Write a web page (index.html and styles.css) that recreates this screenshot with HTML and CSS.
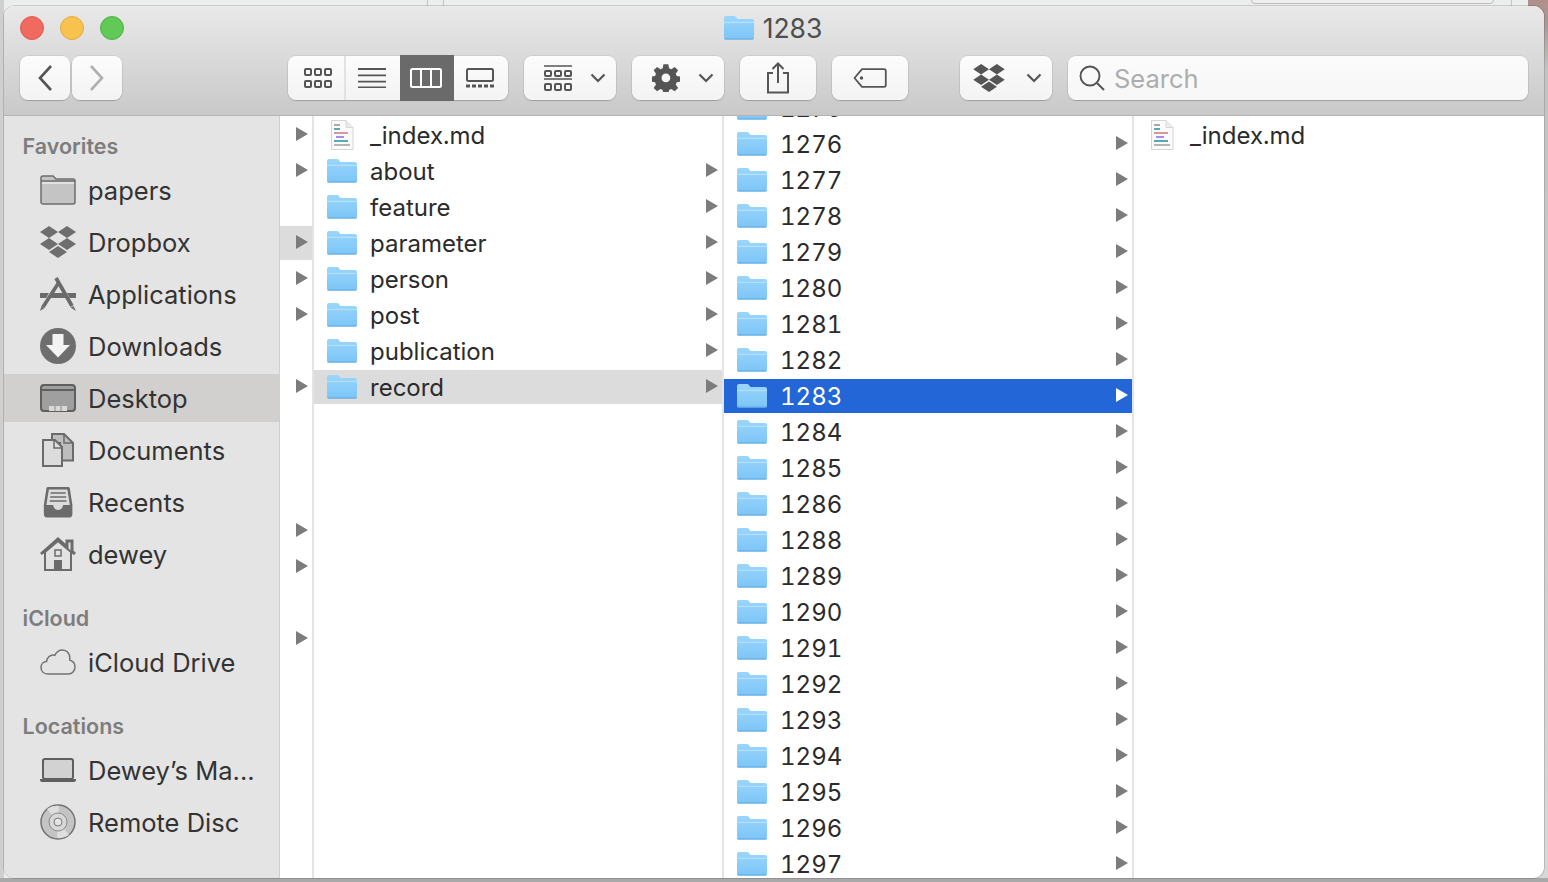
FILE: index.html
```html
<!DOCTYPE html>
<html lang="en">
<head>
<meta charset="utf-8">
<title>1283</title>
<link rel="stylesheet" href="styles.css">
</head>
<body>
<svg class="defs" width="0" height="0" aria-hidden="true">
  <defs>
    <linearGradient id="fg" x1="0" y1="0" x2="0" y2="1"><stop offset="0" stop-color="#9ad6fc"/><stop offset="1" stop-color="#7cc5f7"/></linearGradient>
    <symbol id="folder" viewBox="1 1 29 22.500" preserveAspectRatio="none">
      <path d="M1 3.200C1 1.800 1.800 1 3 1h7.500c1 0 1.500.4 2.200 1.200l1.300 1.600h14c1.300 0 2 .8 2 2V21.500c0 1-.7 1.500-1.700 1.500H2.700C1.700 23 1 22.500 1 21.500z" fill="url(#fg)"/>
      <path d="M1 7h29" stroke="#b4e1fd" stroke-width="1" fill="none"/>
      <path d="M1.500 22.600h28" stroke="#62a9de" stroke-width="1" fill="none"/>
    </symbol>
    <symbol id="file" viewBox="0 0 24 32">
      <path d="M1.500 1.500H16L23 8.500V30.500H1.500z" fill="#fbfbfb" stroke="#d4d4d4"/>
      <path d="M16 1.500V8.500H23" fill="#ececec" stroke="#d8d8d8"/>
      <rect x="4" y="5" width="6" height="2" fill="#a9a9a9"/>
      <rect x="4" y="9" width="6" height="2" fill="#58a9b5"/>
      <rect x="4" y="13" width="14" height="2" fill="#d59a9a"/>
      <rect x="6" y="17" width="8" height="2" fill="#a88bef"/>
      <rect x="4" y="21" width="14" height="2" fill="#58a9b5"/>
      <rect x="4" y="25" width="16" height="2" fill="#b5b5b5"/>
    </symbol>
    <symbol id="dbx" viewBox="0 0 36 32">
      <path d="M9 0 18 6 9 12 0 6zM27 0 36 6 27 12 18 6zM9 12 18 18 9 24 0 18zM27 12 36 18 27 24 18 18zM18 20 27 26 18 32 9 26z"/>
    </symbol>
    <symbol id="tri" viewBox="0 0 12 14"><path d="M0 0 12 7 0 14z"/></symbol>
    <symbol id="chev" viewBox="0 0 16 10"><path d="M1.500 1.500 8 8l6.500-6.500" fill="none" stroke="currentColor" stroke-width="2.200"/></symbol>
    <symbol id="grid" viewBox="0 0 28 20">
      <g fill="none" stroke="currentColor" stroke-width="2"><rect x="1" y="1" width="6" height="6" rx="1"/><rect x="11" y="1" width="6" height="6" rx="1"/><rect x="21" y="1" width="6" height="6" rx="1"/><rect x="1" y="13" width="6" height="6" rx="1"/><rect x="11" y="13" width="6" height="6" rx="1"/><rect x="21" y="13" width="6" height="6" rx="1"/></g>
    </symbol>
  </defs>
</svg>

<div class="backdrop"><span class="bl bl-a"></span><span class="bl bl-b"></span><span class="bl bl-c"></span><span class="bl-pill"></span><span class="bl-brown"></span><span class="bl-bottom"></span></div>

<main class="window">
  <header class="toolbar">
    <div class="titlerow">
      <div class="lights"><span class="light red"></span><span class="light yellow"></span><span class="light green"></span></div>
      <div class="title"><svg class="ic-folder"><use href="#folder"/></svg><span>1283</span></div>
      <div></div>
    </div>
    <div class="tools">
      <div class="nav">
        <button class="btn nav-btn"><svg width="16" height="28" viewBox="0 0 16 28"><path d="M14 2 3 14l11 12" fill="none" stroke="#555" stroke-width="2.600"/></svg></button>
        <button class="btn nav-btn"><svg width="16" height="28" viewBox="0 0 16 28"><path d="M2 2l11 12L2 26" fill="none" stroke="#b0b0b0" stroke-width="2.600"/></svg></button>
      </div>
      <div class="btn viewgroup">
        <span class="seg seg-first"><svg width="28" height="20"><use href="#grid"/></svg></span>
        <span class="seg"><svg width="28" height="20" viewBox="0 0 28 20"><path d="M0 1h28M0 7.300h28M0 13.600h28M0 19.500h28" stroke="currentColor" stroke-width="1.800"/></svg></span>
        <span class="seg seg-active"><svg width="32" height="20" viewBox="0 0 32 20"><rect x="1" y="1" width="30" height="18" rx="1.500" fill="none" stroke="#fff" stroke-width="2"/><path d="M11 1v18M21 1v18" stroke="#fff" stroke-width="2"/></svg></span>
        <span class="seg seg-last"><svg width="28" height="20" viewBox="0 0 28 20"><rect x="1" y="1" width="26" height="12" rx="1.500" fill="none" stroke="currentColor" stroke-width="2"/><path d="M0 18h4M6 18h4M12 18h4M18 18h4M24 18h4" stroke="currentColor" stroke-width="3"/></svg></span>
      </div>
      <button class="btn drop"><svg width="28" height="26" viewBox="0 0 28 26"><path d="M0 1h28M0 14h28" stroke="currentColor" stroke-width="1.600"/><g fill="none" stroke="currentColor" stroke-width="2"><rect x="1" y="6" width="6" height="5" rx="1"/><rect x="11" y="6" width="6" height="5" rx="1"/><rect x="21" y="6" width="6" height="5" rx="1"/><rect x="1" y="19" width="6" height="6" rx="1"/><rect x="11" y="19" width="6" height="6" rx="1"/><rect x="21" y="19" width="6" height="6" rx="1"/></g></svg><svg class="chev"><use href="#chev"/></svg></button>
      <button class="btn drop"><svg width="28" height="28" viewBox="0 0 28 28"><path fill="currentColor" fill-rule="evenodd" d="M11.500 0h5l.8 4.100 2.300 1 3.500-2.400 3.500 3.500-2.400 3.500 1 2.300 4 .8v5l-4 .8-1 2.300 2.400 3.500-3.500 3.500-3.500-2.400-2.300 1-.8 4h-5l-.8-4-2.300-1-3.500 2.400-3.500-3.500 2.400-3.500-1-2.300-4-.8v-5l4-.8 1-2.300-2.400-3.500 3.500-3.500 3.500 2.400 2.300-1zM14 9.500a4.500 4.500 0 1 0 0 9 4.500 4.500 0 0 0 0-9z" transform="translate(0.300 0.300) scale(.97)"/></svg><svg class="chev"><use href="#chev"/></svg></button>
      <button class="btn plain share"><svg width="24" height="32" viewBox="0 0 24 32"><path d="M7 11H2v19.500h20V11h-5M12 21V2M6.500 7 12 1.500 17.500 7" fill="none" stroke="#555" stroke-width="2"/></svg></button>
      <button class="btn plain tag"><svg width="34" height="20" viewBox="0 0 34 20"><path d="M9 1.200h22c1 0 1.800.8 1.800 1.800v14c0 1-.8 1.800-1.800 1.800H9L1.500 10z" fill="none" stroke="#555" stroke-width="1.800" stroke-linejoin="round"/><circle cx="8.500" cy="10" r="1.700" fill="#555"/></svg></button>
      <button class="btn drop dbx-btn"><svg class="ic-dbx"><use href="#dbx"/></svg><svg class="chev"><use href="#chev"/></svg></button>
      <div class="btn search"><svg width="26" height="26" viewBox="0 0 26 26"><circle cx="11" cy="11" r="9.500" fill="none" stroke="#555" stroke-width="1.900"/><path d="M18 18l7 7" stroke="#555" stroke-width="1.900"/></svg><span>Search</span></div>
    </div>
  </header>

  <div class="body">
    <nav class="sidebar">
      <h2 class="side-head">Favorites</h2>
      <a class="side-item"><svg class="side-ic" viewBox="0 0 36 30"><path d="M1 3c0-1 .6-2 2-2h10l3 3h17c1.200 0 2 .8 2 2v21c0 1-.8 2-2 2H3c-1.400 0-2-1-2-2z" fill="#c4c4c4" stroke="#6e6e6e" stroke-width="1.500"/><path d="M1 6h34" stroke="#6e6e6e" stroke-width="1.500"/><path d="M2 7h32v2H2z" fill="#e2e2e2"/></svg><span>papers</span></a>
      <a class="side-item"><svg class="side-ic dbx-side" viewBox="0 0 36 32"><use href="#dbx"/></svg><span>Dropbox</span></a>
      <a class="side-item"><svg class="side-ic" viewBox="0 0 36 34"><path d="M0 16h9l-2.800 5H0zM36 16h-9l2.800 5H36zM12 16h12l2.800 5H9.200z" fill="#6b6b6b"/><path d="M18.500 6 3 30" fill="none" stroke="#6b6b6b" stroke-width="3.600"/><path d="M0 34l1.500-5 3 2z" fill="#6b6b6b"/><path d="M16 1 32 29" fill="none" stroke="#6b6b6b" stroke-width="3.800"/><path d="M36 34l-5.500-3.500 3-1.500z" fill="#6b6b6b"/></svg><span>Applications</span></a>
      <a class="side-item"><svg class="side-ic" viewBox="0 0 36 36"><circle cx="18" cy="18" r="18" fill="#6e6e6e"/><path d="M12.500 6h11v11h6.500L18 29.500 6 17h6.500z" fill="#f3f3f3"/></svg><span>Downloads</span></a>
      <a class="side-item active"><svg class="side-ic" viewBox="0 0 36 28"><rect x="1" y="1" width="34" height="26" rx="3" fill="#9f9f9f" stroke="#5f5f5f" stroke-width="2"/><path d="M1 6h34" stroke="#5f5f5f" stroke-width="2"/><rect x="9" y="22" width="18" height="5" fill="#d8d8d8"/><path d="M15 22v5M21 22v5" stroke="#8a8a8a"/></svg><span>Desktop</span></a>
      <a class="side-item"><svg class="side-ic" viewBox="0 0 36 34"><path d="M12 1h12l9 9v17.500H20V10H12z" fill="#bdbdbd" stroke="#6b6b6b" stroke-width="2"/><path d="M3 7h12l7 7v19H3z" fill="#dcdcdc" stroke="#6b6b6b" stroke-width="2"/><path d="M14 7v8h8M24 1v9h9" fill="none" stroke="#6b6b6b" stroke-width="1.500"/></svg><span>Documents</span></a>
      <a class="side-item"><svg class="side-ic" viewBox="0 0 36 36"><g transform="translate(3 2) scale(.84 1)"><path d="M6 1h24c1 0 1.800.7 2 1.700L35 19v9c0 2-1.500 3.500-3 3.500H4c-1.500 0-3-1.500-3-3.500v-9L4 2.700C4.200 1.700 5 1 6 1z" fill="#6b6b6b"/><path d="M7 3.500h22L32 19H24c-.5 3-3 5-6 5s-5.500-2-6-5H4z" fill="#dcdcdc"/><path d="M9 7h18M8.500 11h19M8 15h20" stroke="#6b6b6b" stroke-width="1.500"/></g></svg><span>Recents</span></a>
      <a class="side-item"><svg class="side-ic" viewBox="0 0 36 34"><path d="M5 15v18h26V15L18 4z" fill="#e2e2e2" stroke="#6b6b6b" stroke-width="2"/><path d="M1 17 18 2l9 8V4h5v10.500l3 2.500" fill="none" stroke="#6b6b6b" stroke-width="3"/><rect x="15" y="13" width="6" height="6" fill="#e2e2e2" stroke="#6b6b6b" stroke-width="1.500"/><rect x="14" y="23" width="8" height="10" fill="#6b6b6b"/></svg><span>dewey</span></a>

      <h2 class="side-head spaced">iCloud</h2>
      <a class="side-item"><svg class="side-ic" viewBox="0 0 36 26"><path d="M8 25C3.500 25 1 22 1 18.500 1 15 3.500 12.700 6.500 12.500 7 8.500 10 6 13 6c.6 0 1.200.1 1.800.3C16.500 2.800 19.500 1 22.500 1 26.800 1 29.800 4.500 29.800 9l-.1 2c3.300 1 5.300 3.800 5.300 7 0 4-3 7-6.500 7z" fill="#e4e4e4" stroke="#737373" stroke-width="1.500"/></svg><span>iCloud Drive</span></a>

      <h2 class="side-head spaced">Locations</h2>
      <a class="side-item"><svg class="side-ic" viewBox="0 0 36 24"><rect x="3" y="1" width="30" height="20" rx="2" fill="#d2d2d2" stroke="#5f5f5f" stroke-width="2"/><path d="M0 21h36v1c0 1-1 2-2 2H2c-1 0-2-1-2-2z" fill="#5f5f5f"/></svg><span>Dewey’s Ma...</span></a>
      <a class="side-item"><svg class="side-ic" viewBox="0 0 36 36"><circle cx="18" cy="18" r="17" fill="#c4c4c4" stroke="#737373" stroke-width="1.500"/><path d="M18 18 7 5a17 17 0 0 1 12-3zM18 18l11 13a17 17 0 0 1-12 3z" fill="#dedede"/><circle cx="18" cy="18" r="9" fill="#d8d8d8" stroke="#8a8a8a"/><circle cx="18" cy="18" r="4" fill="#e4e4e4" stroke="#7a7a7a"/></svg><span>Remote Disc</span></a>
    </nav>

    <div class="col col-stub">
      <div class="row"><svg class="tri"><use href="#tri"/></svg></div>
      <div class="row"><svg class="tri"><use href="#tri"/></svg></div>
      <div class="row"></div>
      <div class="row sel-gray"><svg class="tri"><use href="#tri"/></svg></div>
      <div class="row"><svg class="tri"><use href="#tri"/></svg></div>
      <div class="row"><svg class="tri"><use href="#tri"/></svg></div>
      <div class="row"></div>
      <div class="row"><svg class="tri"><use href="#tri"/></svg></div>
      <div class="row"></div>
      <div class="row"></div>
      <div class="row"></div>
      <div class="row"><svg class="tri"><use href="#tri"/></svg></div>
      <div class="row"><svg class="tri"><use href="#tri"/></svg></div>
      <div class="row"></div>
      <div class="row"><svg class="tri"><use href="#tri"/></svg></div>
    </div>

    <div class="col col-main">
      <div class="row"><svg class="ic-file"><use href="#file"/></svg><span class="name">_index.md</span></div>
      <div class="row"><svg class="ic-folder"><use href="#folder"/></svg><span class="name">about</span><svg class="tri"><use href="#tri"/></svg></div>
      <div class="row"><svg class="ic-folder"><use href="#folder"/></svg><span class="name">feature</span><svg class="tri"><use href="#tri"/></svg></div>
      <div class="row"><svg class="ic-folder"><use href="#folder"/></svg><span class="name">parameter</span><svg class="tri"><use href="#tri"/></svg></div>
      <div class="row"><svg class="ic-folder"><use href="#folder"/></svg><span class="name">person</span><svg class="tri"><use href="#tri"/></svg></div>
      <div class="row"><svg class="ic-folder"><use href="#folder"/></svg><span class="name">post</span><svg class="tri"><use href="#tri"/></svg></div>
      <div class="row"><svg class="ic-folder"><use href="#folder"/></svg><span class="name">publication</span><svg class="tri"><use href="#tri"/></svg></div>
      <div class="row sel-gray"><svg class="ic-folder"><use href="#folder"/></svg><span class="name">record</span><svg class="tri"><use href="#tri"/></svg></div>
    </div>

    <div class="col col-main col-scrolled">
      <div class="list">
        <div class="row"><svg class="ic-folder"><use href="#folder"/></svg><span class="name">1275</span><svg class="tri"><use href="#tri"/></svg></div>
        <div class="row"><svg class="ic-folder"><use href="#folder"/></svg><span class="name">1276</span><svg class="tri"><use href="#tri"/></svg></div>
        <div class="row"><svg class="ic-folder"><use href="#folder"/></svg><span class="name">1277</span><svg class="tri"><use href="#tri"/></svg></div>
        <div class="row"><svg class="ic-folder"><use href="#folder"/></svg><span class="name">1278</span><svg class="tri"><use href="#tri"/></svg></div>
        <div class="row"><svg class="ic-folder"><use href="#folder"/></svg><span class="name">1279</span><svg class="tri"><use href="#tri"/></svg></div>
        <div class="row"><svg class="ic-folder"><use href="#folder"/></svg><span class="name">1280</span><svg class="tri"><use href="#tri"/></svg></div>
        <div class="row"><svg class="ic-folder"><use href="#folder"/></svg><span class="name">1281</span><svg class="tri"><use href="#tri"/></svg></div>
        <div class="row"><svg class="ic-folder"><use href="#folder"/></svg><span class="name">1282</span><svg class="tri"><use href="#tri"/></svg></div>
        <div class="row sel-blue"><svg class="ic-folder"><use href="#folder"/></svg><span class="name">1283</span><svg class="tri"><use href="#tri"/></svg></div>
        <div class="row"><svg class="ic-folder"><use href="#folder"/></svg><span class="name">1284</span><svg class="tri"><use href="#tri"/></svg></div>
        <div class="row"><svg class="ic-folder"><use href="#folder"/></svg><span class="name">1285</span><svg class="tri"><use href="#tri"/></svg></div>
        <div class="row"><svg class="ic-folder"><use href="#folder"/></svg><span class="name">1286</span><svg class="tri"><use href="#tri"/></svg></div>
        <div class="row"><svg class="ic-folder"><use href="#folder"/></svg><span class="name">1288</span><svg class="tri"><use href="#tri"/></svg></div>
        <div class="row"><svg class="ic-folder"><use href="#folder"/></svg><span class="name">1289</span><svg class="tri"><use href="#tri"/></svg></div>
        <div class="row"><svg class="ic-folder"><use href="#folder"/></svg><span class="name">1290</span><svg class="tri"><use href="#tri"/></svg></div>
        <div class="row"><svg class="ic-folder"><use href="#folder"/></svg><span class="name">1291</span><svg class="tri"><use href="#tri"/></svg></div>
        <div class="row"><svg class="ic-folder"><use href="#folder"/></svg><span class="name">1292</span><svg class="tri"><use href="#tri"/></svg></div>
        <div class="row"><svg class="ic-folder"><use href="#folder"/></svg><span class="name">1293</span><svg class="tri"><use href="#tri"/></svg></div>
        <div class="row"><svg class="ic-folder"><use href="#folder"/></svg><span class="name">1294</span><svg class="tri"><use href="#tri"/></svg></div>
        <div class="row"><svg class="ic-folder"><use href="#folder"/></svg><span class="name">1295</span><svg class="tri"><use href="#tri"/></svg></div>
        <div class="row"><svg class="ic-folder"><use href="#folder"/></svg><span class="name">1296</span><svg class="tri"><use href="#tri"/></svg></div>
        <div class="row"><svg class="ic-folder"><use href="#folder"/></svg><span class="name">1297</span><svg class="tri"><use href="#tri"/></svg></div>
      </div>
    </div>

    <div class="col col-main col-last">
      <div class="row"><svg class="ic-file"><use href="#file"/></svg><span class="name">_index.md</span></div>
    </div>
  </div>
</main>
</body>
</html>
```

FILE: styles.css
```css
* { box-sizing: border-box; }
html, body { margin: 0; height: 882px; overflow: hidden; }
body {
  position: relative;
  background: #dcdede;
  font-family: Inter, "Liberation Sans", sans-serif;
  padding: 6px 4px 4px;
}
.defs { position: absolute; }

.backdrop { position: absolute; inset: 0; background: linear-gradient(90deg, #cfcfcf 4px, #eceeee 4px); }
.bl { position: absolute; top: 0; bottom: 0; width: 1px; background: #c4c6c6; }
.bl-a { left: 427px; }
.bl-b { left: 443px; }
.bl-c { left: 1511px; }
.bl-pill { position: absolute; left: 1251px; top: -8px; width: 243px; height: 12px; border: 1px solid #bdbdbd; border-radius: 4px; background: #efefef; }
.bl-brown { position: absolute; right: 0; top: 0; bottom: 0; width: 20px; background: linear-gradient(#b08f8b, #a89a98 24px, #c4c4c4 70px, #d8d8d8); }
.bl-bottom { position: absolute; left: 0; right: 0; bottom: 0; height: 4px; background: #a9a9a9; }

.window {
  position: relative;
  height: 872px;
  background: #fff;
  border-radius: 11px;
  overflow: hidden;
  display: flex;
  flex-direction: column;
  box-shadow: 0 0 0 1px rgba(0,0,0,.14);
}

/* toolbar */
.toolbar {
  height: 110px;
  flex: none;
  padding: 10px 16px 0;
  background: linear-gradient(#e9e9e9, #c9c9c9);
  border-bottom: 1px solid #b4b4b4;
}
.titlerow { display: grid; grid-template-columns: 1fr auto 1fr; height: 24px; align-items: center; }
.lights { display: flex; gap: 16px; }
.light { width: 24px; height: 24px; border-radius: 50%; }
.red { background: #f16a60; border: 1px solid #dd5a50; }
.yellow { background: #f8c24e; border: 1px solid #e3a93e; }
.green { background: #61c955; border: 1px solid #50ae45; }
.title { display: flex; align-items: center; gap: 9px; font-size: 26.500px; line-height: 24px; color: #4e4e4e; padding-right: 2px; }
.ic-folder { width: 30px; height: 24px; flex: none; }

.tools { display: flex; margin-top: 16px; height: 44px; }
.btn {
  height: 44px;
  padding: 0;
  border: 0;
  border-radius: 8px;
  background: linear-gradient(#fcfcfc, #f3f3f3);
  box-shadow: 0 0 0 .5px rgba(0,0,0,.13), 0 1px 1px rgba(0,0,0,.18);
  color: #555;
  display: flex;
  align-items: center;
  justify-content: center;
  font-family: inherit;
}
.nav { display: flex; gap: 2px; }
.nav-btn { width: 50px; }
.viewgroup { margin-left: 166px; width: 220px; gap: 0; align-items: stretch; }
.seg { width: 54px; padding-right: 2px; display: flex; align-items: center; justify-content: center; }
.seg-first { width: 58px; border-right: 2px solid #e2e2e2; border-radius: 8px 0 0 8px; padding: 0 0 0 4px; }
.seg-last { width: 54px; }
.seg-active { margin: -1px 0; background: #6a6a6a; }
.drop { width: 92px; margin-left: 16px; padding: 0 10px 0 20px; justify-content: space-between; }
.chev { width: 16px; height: 10px; color: #555; }
.plain { width: 76px; margin-left: 16px; }
.dbx-btn { margin-left: 52px; padding-left: 13px; }
.ic-dbx { width: 32px; height: 28px; fill: #555; }
.search {
  flex: 1;
  margin-left: 16px;
  justify-content: flex-start;
  padding-left: 11px;
  gap: 9px;
  font-size: 25.500px;
  color: #adadad;
  background: linear-gradient(#fbfbfb, #f7f7f7);
}

/* body */
.body { flex: 1; min-height: 0; display: flex; }

.sidebar {
  width: 276px;
  flex: none;
  background: #e4e4e4;
  border-right: 1px solid #cfcfcf;
  padding-top: 18px;
}
.side-head {
  margin: 0 0 8px 18.500px;
  height: 24px;
  line-height: 24px;
  font-size: 21.500px;
  font-weight: 600;
  color: #7d7d7d;
}
.side-head.spaced { margin-top: 28px; }
.side-item {
  height: 48px;
  margin-bottom: 4px;
  padding-left: 36px;
  display: flex;
  align-items: center;
  gap: 12px;
  font-size: 25.500px;
  color: #333;
}
.side-item.active { background: #d1d0cf; }
.side-ic { width: 36px; height: 36px; flex: none; }
.dbx-side { fill: #6e6e6e; }

.col {
  flex: none;
  height: 100%;
  padding-top: 2px;
  overflow: hidden;
  border-right: 2px solid #e4e4e4;
}
.col-stub { width: 34px; }
.col-main { width: 410px; }
.col-last { flex: 1; border-right: 0; }
.col-scrolled { padding-top: 0; }
.col-scrolled .list { margin-top: -25px; }

.row {
  height: 34px;
  margin-bottom: 2px;
  display: flex;
  align-items: center;
  padding-left: 13px;
  padding-right: 4px;
}
.col-stub .row { padding-left: 16px; }
.name {
  flex: 1;
  margin-left: 13px;
  font-size: 24px;
  font-variant-numeric: tabular-nums;
  color: #2b2b2b;
  white-space: nowrap;
}
.ic-file { width: 24px; height: 32px; flex: none; margin-left: 3px; margin-right: 3px; }
.tri { width: 12px; height: 14px; flex: none; fill: #7c7c7c; margin-top: -2px; }
.sel-gray { background: #dcdcdc; }
.sel-blue { background: #2366d8; }
.sel-blue .name { color: #fff; }
.sel-blue .tri { fill: #fff; }
```
